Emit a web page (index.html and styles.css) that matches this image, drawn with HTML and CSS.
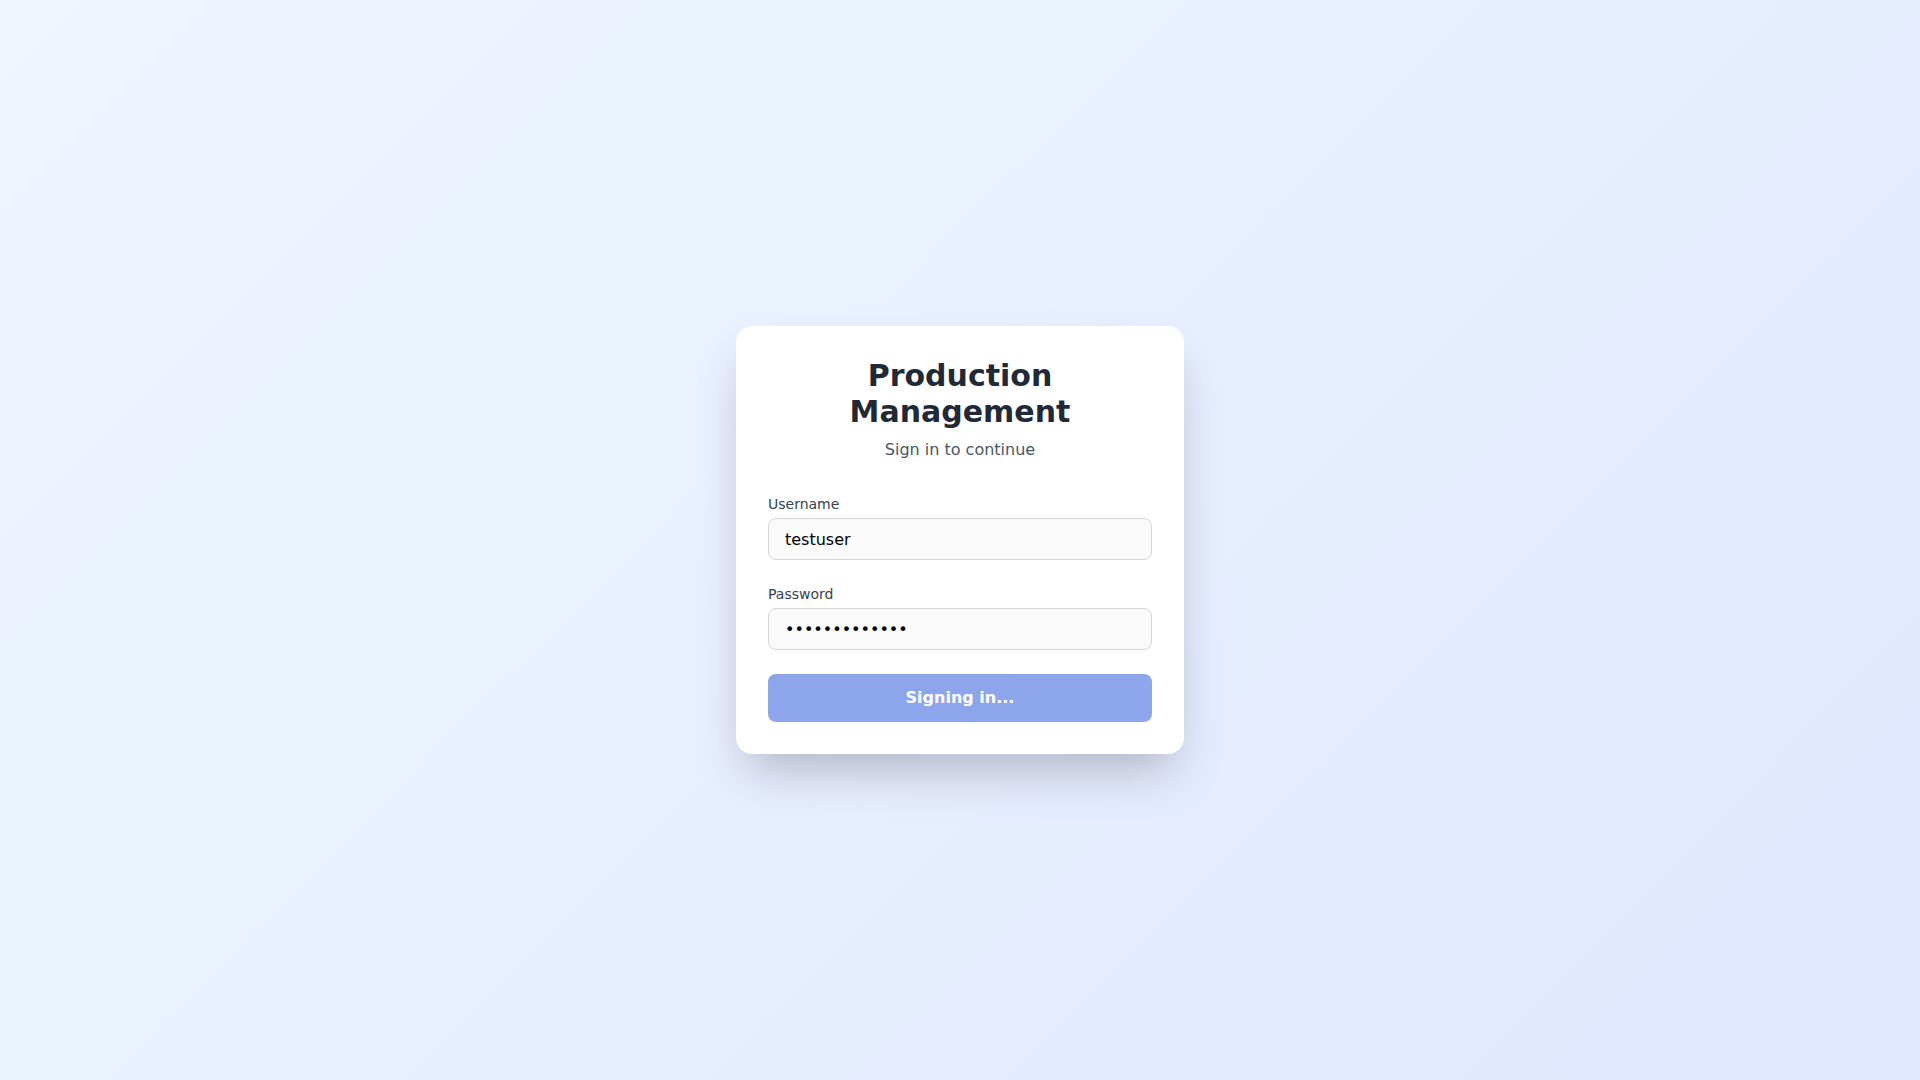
FILE: index.html
```html
<!DOCTYPE html>
<html lang="en">
<head>
<meta charset="utf-8">
<title>Production Management - Sign in</title>
<link rel="stylesheet" href="styles.css">
</head>
<body>
<main class="page">
  <div class="card">
    <div class="header">
      <h1 class="title">Production Management</h1>
      <p class="subtitle">Sign in to continue</p>
    </div>
    <form class="form" onsubmit="return false;">
      <div class="field">
        <label class="label" for="username">Username</label>
        <input class="input" id="username" type="text" value="testuser">
      </div>
      <div class="field">
        <label class="label" for="password">Password</label>
        <input class="input" id="password" type="password" value="password12345">
      </div>
      <button class="button" type="submit" disabled>Signing in...</button>
    </form>
  </div>
</main>
</body>
</html>
```

FILE: styles.css
```css
* { box-sizing: border-box; }
html, body { margin: 0; padding: 0; }
body {
  font-family: "DejaVu Sans", sans-serif;
  min-height: 100vh;
  background: linear-gradient(135deg, #eff6ff 0%, #e0e7ff 100%);
}
.page {
  min-height: 100vh;
  display: flex;
  align-items: center;
  justify-content: center;
}
.card {
  width: 448px;
  background: #ffffff;
  border-radius: 16px;
  padding: 32px;
  box-shadow: 0 25px 50px -12px rgba(0, 0, 0, 0.25);
}
.header {
  text-align: center;
  margin-bottom: 32px;
}
.title {
  margin: 0;
  font-size: 30px;
  line-height: 36px;
  font-weight: 700;
  color: #1f2937;
}
.subtitle {
  margin: 8px 0 0;
  font-size: 16px;
  line-height: 24px;
  color: #4b5563;
}
.form {
  display: flex;
  flex-direction: column;
  gap: 24px;
}
.field {
  display: flex;
  flex-direction: column;
}
.label {
  font-size: 14px;
  line-height: 20px;
  color: #374151;
  margin-bottom: 4px;
}
.input {
  width: 100%;
  height: 42px;
  padding: 8px 16px;
  font-family: "DejaVu Sans", sans-serif;
  font-size: 16px;
  line-height: 24px;
  color: #000000;
  background: #fafafa;
  border: 1px solid #d4d4d8;
  border-radius: 8px;
  outline: none;
}
.button {
  width: 100%;
  height: 48px;
  padding: 12px 16px;
  border: none;
  border-radius: 8px;
  background: #1d4ed8;
  opacity: 0.5;
  color: #ffffff;
  font-family: "DejaVu Sans", sans-serif;
  font-size: 16px;
  line-height: 24px;
  font-weight: 700;
  cursor: not-allowed;
}
```
